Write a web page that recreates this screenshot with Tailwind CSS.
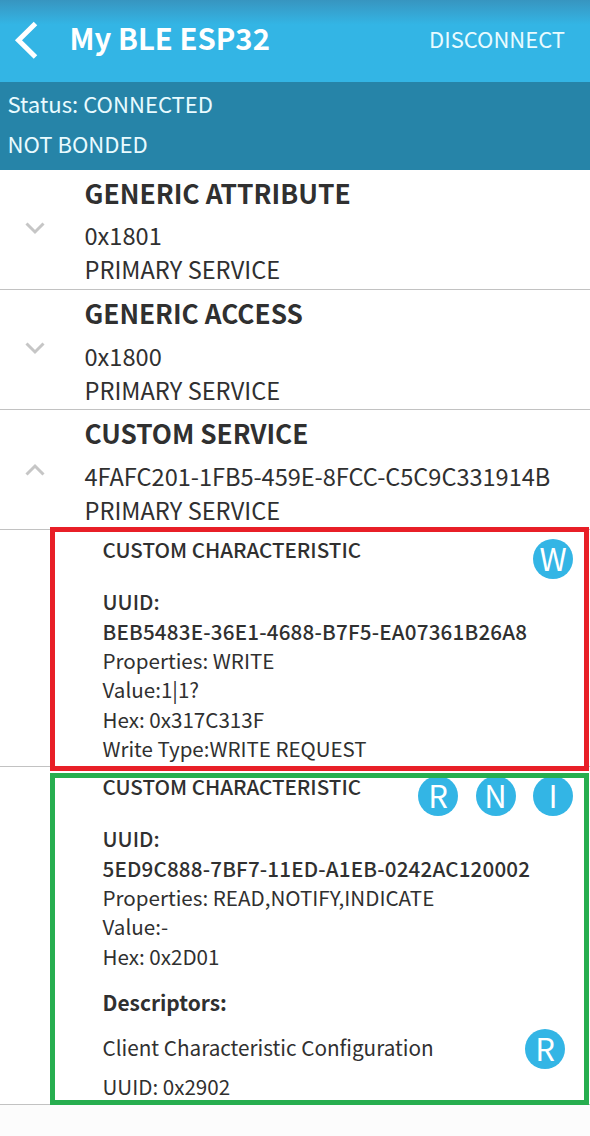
<!DOCTYPE html>
<html lang="en">
<head>
<meta charset="utf-8">
<title>My BLE ESP32</title>
<script src="https://cdn.jsdelivr.net/npm/@tailwindcss/browser@4"></script>
</head>
<body class="relative w-[590px] h-[1136px] overflow-hidden bg-[#fcfcfc] font-['Noto_Sans_CJK_SC','Noto_Sans',sans-serif] text-[#303030] whitespace-nowrap">
<header class="flex h-[82px] items-start bg-linear-to-b from-[#3795c0] via-[#33b5e5] via-30% to-[#33b5e5] text-white">
  <svg class="mt-5 ml-3 h-10 w-7 shrink-0" viewBox="0 0 28 40" fill="none" stroke="currentColor" stroke-width="5"><path d="M23.5 3.5 6.5 20.3 23.5 37"/></svg>
  <h1 class="ml-[29.5px] mt-[17px] text-[29.3px] leading-[40px] font-bold">My BLE ESP32</h1>
  <button class="ml-auto mr-[25px] mt-[18px] text-[22px] leading-[40px] text-[#e9fbff]">DISCONNECT</button>
</header>
<section class="h-[88px] bg-[#2684a8] pt-px pl-[7.5px] text-[22.1px] leading-[40px] text-[#e9fbff]">
  <p>Status: CONNECTED</p>
  <p>NOT BONDED</p>
</section>
<main class="bg-white">
  <article class="flex h-[120px] border-b border-[#c2c2c2] pt-[6px]">
    <div class="w-[84.5px] shrink-0 pt-[45px] pl-[25px]"><svg class="h-4 w-5" viewBox="0 0 20 16" fill="none" stroke="#c6c6c6" stroke-width="3"><path d="M1.5 2.5 10 11 18.5 2.5"/></svg></div>
    <div class="text-[23.6px] leading-[34px]">
      <h2 class="mb-[8px] text-[26.4px] leading-[34px] font-bold">GENERIC ATTRIBUTE</h2>
      <p>0x1801</p>
      <p>PRIMARY SERVICE</p>
    </div>
  </article>
  <article class="flex h-[120px] border-b border-[#c2c2c2] pt-[6px]">
    <div class="w-[84.5px] shrink-0 pt-[45px] pl-[25px]"><svg class="h-4 w-5" viewBox="0 0 20 16" fill="none" stroke="#c6c6c6" stroke-width="3"><path d="M1.5 2.5 10 11 18.5 2.5"/></svg></div>
    <div class="text-[23.6px] leading-[34px]">
      <h2 class="mb-[9px] text-[26.2px] leading-[34px] font-bold">GENERIC ACCESS</h2>
      <p>0x1800</p>
      <p>PRIMARY SERVICE</p>
    </div>
  </article>
  <article class="flex h-[120px] border-b border-[#c2c2c2] pt-[6px]">
    <div class="w-[84.5px] shrink-0 pt-[45px] pl-[25px]"><svg class="h-4 w-5" viewBox="0 0 20 16" fill="none" stroke="#c6c6c6" stroke-width="3"><path d="M1.5 13.5 10 5 18.5 13.5"/></svg></div>
    <div class="text-[23.6px] leading-[34px]">
      <h2 class="mb-[9px] text-[26.2px] leading-[34px] font-bold">CUSTOM SERVICE</h2>
      <p class="tracking-[-0.04px]">4FAFC201-1FB5-459E-8FCC-C5C9C331914B</p>
      <p>PRIMARY SERVICE</p>
    </div>
  </article>

  <article class="h-[237px] border-b border-[#c2c2c2] pt-[5px] pl-[102.5px] text-[20.6px] leading-[29.5px]">
    <div class="flex h-[52px] items-start justify-between pr-[17px]">
      <h3 class="font-medium">CUSTOM CHARACTERISTIC</h3>
      <span class="mt-1 flex size-10 items-center justify-center rounded-full bg-[#33b5e5] pb-[3px] text-[31px] leading-none text-white">W</span>
    </div>
    <p class="font-medium">UUID:</p>
    <p class="font-medium leading-[29px] tracking-[0.2px]">BEB5483E-36E1-4688-B7F5-EA07361B26A8</p>
    <p>Properties: WRITE</p>
    <p>Value:1|1?</p>
    <p>Hex: 0x317C313F</p>
    <p class="text-[20.5px]">Write Type:WRITE REQUEST</p>
  </article>

  <article class="h-[338px] border-b border-[#c2c2c2] pt-[5px] pl-[102.5px] text-[20.6px] leading-[29.5px]">
    <div class="flex h-[52px] items-start justify-between pr-[17px]">
      <h3 class="font-medium">CUSTOM CHARACTERISTIC</h3>
      <div class="mt-1 flex gap-[17.5px] text-[31px] leading-none text-white">
        <span class="flex size-10 items-center justify-center rounded-full bg-[#33b5e5] pb-[3px]">R</span>
        <span class="flex size-10 items-center justify-center rounded-full bg-[#33b5e5] pb-[3px]">N</span>
        <span class="flex size-10 items-center justify-center rounded-full bg-[#33b5e5] pb-[3px]">I</span>
      </div>
    </div>
    <p class="font-medium">UUID:</p>
    <p class="font-medium leading-[29px] tracking-[0.18px]">5ED9C888-7BF7-11ED-A1EB-0242AC120002</p>
    <p>Properties: READ,NOTIFY,INDICATE</p>
    <p>Value:-</p>
    <p>Hex: 0x2D01</p>
    <h4 class="mt-[17px] text-[20.9px] font-bold">Descriptors:</h4>
    <div class="mt-[11.5px] flex h-10 items-center justify-between pr-[25px]">
      <p class="pb-[2px] text-[20.7px]">Client Characteristic Configuration</p>
      <span class="flex size-10 items-center justify-center rounded-full bg-[#33b5e5] pb-[3px] text-[31px] leading-none text-white">R</span>
    </div>
    <p class="mt-[3px]">UUID: 0x2902</p>
  </article>
</main>
<div class="absolute left-[50px] top-[527px] h-[244px] w-[539px] border-5 border-[#e81f27]"></div>
<div class="absolute left-[50px] top-[773px] h-[332px] w-[539px] border-5 border-[#27ae4f]"></div>
</body>
</html>
